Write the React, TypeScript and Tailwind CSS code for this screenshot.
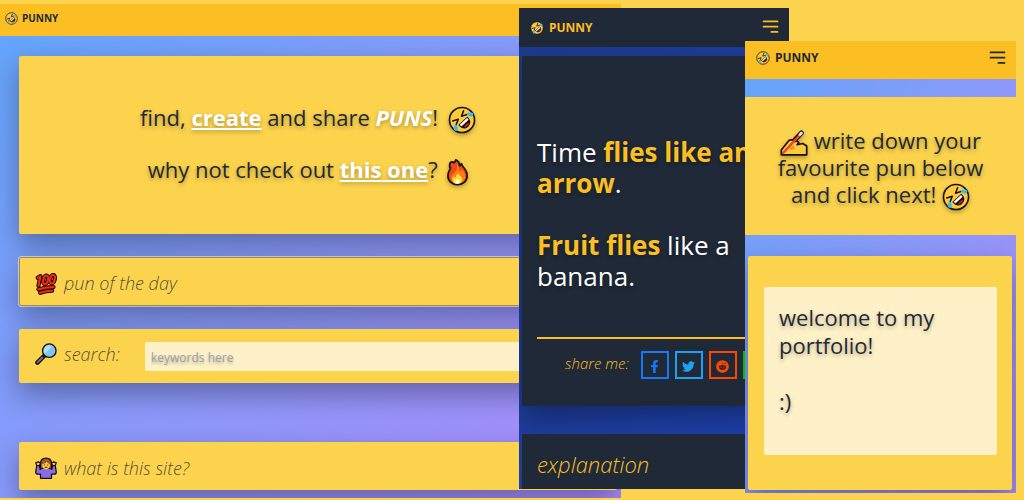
import type { ReactNode } from "react";
import { FaFacebookF, FaLine, FaReddit, FaTwitter } from "react-icons/fa";

function Rofl({ className }: { className: string }) {
  return (
    <svg viewBox="0 0 32 32" className={className} aria-hidden="true">
      <circle cx="16" cy="16" r="14.3" fill="#ffc83d" stroke="#111" strokeWidth="1.8" />
      <g transform="rotate(-43 16 16)" strokeLinecap="round" strokeLinejoin="round">
        <path d="M7.500 9.500l6 3-6 2.800M24.500 9.500l-6 3 6 2.800" fill="none" stroke="#111" strokeWidth="1.700" />
        <path d="M9.500 18h13c0 4.800-2.500 7.800-6.500 7.800S9.500 22.800 9.500 18z" fill="#111" stroke="#111" strokeWidth="1.200" />
        <path d="M10.300 18.300h11.400v2.700H10.300z" fill="#fff" />
        <path d="M12.500 24c1-1.600 6-1.600 7 0-1.200 1.400-5.800 1.400-7 0z" fill="#e8122a" />
        <path d="M7.500 14.800c-2.800-.4-5.300 1-5.800 3.200-.4 1.900.9 3.200 2.700 2.800 2-.5 3-2.600 3.100-6z" fill="#3fb8f0" />
        <path d="M24.500 14.800c2.800-.4 5.300 1 5.800 3.200.4 1.900-.9 3.200-2.700 2.800-2-.5-3-2.600-3.100-6z" fill="#3fb8f0" />
      </g>
    </svg>
  );
}

function Fire({ className }: { className: string }) {
  return (
    <svg viewBox="0 0 24 32" className={className} aria-hidden="true">
      <path
        d="M10 2c3 1.500 4.500 4 4.500 7 1-.8 1.500-1.500 2-2.500 1 2.500 2 4 3.500 5.500 2 2.500 3 5 3 8 0 6.500-4.500 10.500-11 10.500S1 26.500 1 20c0-3.500 1.500-6 3-8.500-1-1-1.300-2.500-1-4C3.300 6 4.500 4.500 6 4.500c.8 0 1.500.5 2 1C9 4.500 9.800 3.500 10 2z"
        fill="#ee4b12"
        stroke="#111"
        strokeWidth="1.900"
        strokeLinejoin="round"
      />
      <path d="M11 7c1 4 .5 6-1.500 8.500C7 18.500 4 20 5 24.500c1 3 4 4.300 7.500 4.300 5 0 8.500-3 8.500-7.800 0-3.500-2-5.500-4-8-1 1.500-2 2-3.200 2.200C14.500 12 13.500 9 11 7z" fill="#ff7a1a" />
      <path d="M7 21c1.300.3 1.800 1 2.300 2 1-2 1.500-4 3.700-5.500 0 2.500 4.500 3.500 4.500 7 0 3-2.500 5-5.700 5S6.300 27.500 6.300 25c0-1.500.2-2.800.7-4z" fill="#ffdf2b" />
      <path d="M9.500 27.300c0-1.300 1.300-2.500 2.500-3.500 1 1.200 2.500 2 2.500 3.500 0 1.200-1 2-2.500 2s-2.500-.8-2.500-2z" fill="#fff" />
    </svg>
  );
}

function Hundred({ className }: { className: string }) {
  return (
    <svg viewBox="0 0 32 32" className={className} aria-hidden="true">
      {[
        { stroke: "#150503", width: 6 },
        { stroke: "#ee2a10", width: 3.2 },
      ].map((layer) => (
        <g key={layer.stroke} fill="none" stroke={layer.stroke} strokeWidth={layer.width} strokeLinecap="round" strokeLinejoin="round">
          <path d="M4 7l4-2.500-3 14" />
          <ellipse cx="15.500" cy="10" rx="3.400" ry="6.300" transform="rotate(16 15.500 10)" />
          <ellipse cx="25.300" cy="9" rx="3.400" ry="6.300" transform="rotate(16 25.300 9)" />
          <path d="M5 23.800c7-2.300 14-3.300 22-3.300M7.500 28.800c5.500-2 11-3 17.500-3" />
        </g>
      ))}
    </svg>
  );
}

function Magnifier({ className }: { className: string }) {
  return (
    <svg viewBox="0 0 32 32" className={className} aria-hidden="true">
      <path d="M3.500 28.500l10-10" stroke="#111" strokeWidth="6.500" strokeLinecap="round" />
      <path d="M3.800 28.200l7-7" stroke="#6d7378" strokeWidth="3" strokeLinecap="round" />
      <circle cx="20.800" cy="11.200" r="9.800" fill="#84c5f4" stroke="#111" strokeWidth="1.900" />
      <path d="M14 15.500l10.500-10.500c-4-2.500-9-1-11 3-1.200 2.500-.8 5.500.5 7.500z" fill="#b5defa" />
    </svg>
  );
}

function Shrug({ className }: { className: string }) {
  return (
    <svg viewBox="0 0 32 32" className={className} aria-hidden="true">
      <g stroke="#111" strokeWidth="1.800" strokeLinejoin="round">
        <path d="M8 17V9.500C8 4.500 11 1.500 16 1.500s8 3 8 8V17z" fill="#a0562d" />
        <path d="M1 8.500l4-1.500 3 2-2 4H3zM31 8.500L27 7l-3 2 2 4h3z" fill="#ffc83d" />
        <path d="M2.500 12.500h4l1 5.500c2-1.500 5-2 8.500-2s6.500.5 8.500 2l1-5.500h4L31 22c0 2-1.500 3-3.500 3H24v6H8v-6H4.500C2.500 25 1 24 1 22z" fill="#8a6bea" />
      </g>
      <path d="M10.500 10c2.800 0 5.500-1.500 6.500-3.500.5 2 2 3 4.500 3.500v2.500c0 3.500-2.500 5.500-5.500 5.500s-5.500-2-5.500-5.500z" fill="#ffc83d" />
      <path d="M13.500 11.500v.1M18.500 11.500v.1M14.800 15h2.500" stroke="#111" strokeWidth="1.400" strokeLinecap="round" />
    </svg>
  );
}

function WritingHand({ className }: { className: string }) {
  return (
    <svg viewBox="0 0 32 32" className={className} aria-hidden="true">
      <path
        d="M1.500 29.500V24L9 14.500c1-1.500 2-2 3.500-2H18l3.500 3-2 2.500 6.500-1.500 4.500 3v10z"
        fill="#ffc83d"
        stroke="#111"
        strokeWidth="1.900"
        strokeLinejoin="round"
      />
      <path d="M10.500 22l5-4 1.500 4c-2 2.500-5 2.500-6.500 0z" fill="#e39d22" />
      <path d="M17 12.500L24.500 4.500" stroke="#111" strokeWidth="5.600" strokeLinecap="round" />
      <path d="M3.500 27.500L22.500 7" stroke="#f0432a" strokeWidth="2.700" strokeLinecap="round" />
      <path d="M22.800 6.500l1.700-1.900" stroke="#dfe8ee" strokeWidth="3.200" strokeLinecap="round" />
    </svg>
  );
}

function MenuButton() {
  return (
    <button type="button" aria-label="Menu">
      <svg viewBox="0 0 24 24" className="block size-[21px]" fill="none" stroke="currentColor" strokeWidth="2" strokeLinecap="round">
        <path d="M4 5h16M4 11h16M13 17h7" />
      </svg>
    </button>
  );
}

const shareLinks = [
  { label: "Facebook", icon: <FaFacebookF />, style: "border-[#1877f2] text-[#1877f2]" },
  { label: "Twitter", icon: <FaTwitter />, style: "border-[#1da1f2] text-[#1da1f2]" },
  { label: "Reddit", icon: <FaReddit />, style: "border-[#ff4500] text-[#ff4500]" },
  { label: "Line", icon: <FaLine />, style: "border-[#00c300] text-[#00c300]" },
];

const emoji = "-my-1 inline-block align-middle drop-shadow-[0_2px_2px_rgba(0,0,0,0.3)]";
const cardShadow = "shadow-[0_12px_28px_rgba(0,0,0,0.32)]";

function SectionButton({ icon, children, className }: { icon: ReactNode; children: ReactNode; className: string }) {
  return (
    <button
      type="button"
      className={`flex w-full items-center gap-[7px] rounded-xs border bg-[#fcd34d] px-[15px] pt-1 text-left text-[18px] font-light italic text-[#1f2937]/80 ${cardShadow} ${className}`}
    >
      {icon}
      {children}
    </button>
  );
}

function HomeWindow() {
  return (
    <section className="col-span-2 col-start-1 row-start-1 mt-1 min-w-0 overflow-hidden bg-linear-to-br from-[#60a5fa] to-[#a78bfa]">
      <header className="flex h-8 items-center gap-1 bg-[#fbbf24] px-[5px] pb-1">
        <Rofl className="size-[13px]" />
        <h1 className="text-[10px] font-bold">PUNNY</h1>
      </header>
      <main className="flex flex-col pt-5 pr-1 pb-2 pl-[19px]">
        <div
          className={`flex h-[178px] flex-col items-center justify-center gap-4 rounded-xs bg-[#fcd34d] pr-5 pb-1 text-[22px] leading-9 whitespace-nowrap [text-shadow:0_2px_4px_rgba(0,0,0,0.3)] ${cardShadow}`}
        >
          <p>
            find,{" "}
            <a href="#create" className="font-bold text-white underline decoration-2 underline-offset-2">create</a> and share{" "}
            <em className="font-bold text-white">PUNS</em>! <Rofl className={`ml-1 size-7 ${emoji}`} />
          </p>
          <p>
            why not check out{" "}
            <a href="#pun" className="font-bold text-white underline decoration-2 underline-offset-2">this one</a>?{" "}
            <Fire className={`ml-1 h-7 w-[21px] ${emoji}`} />
          </p>
        </div>
        <SectionButton
          icon={<Hundred className="size-[22px]" />}
          className="mt-[23px] h-[49px] border-[#a58a3c] outline outline-white/50"
        >
          pun of the day
        </SectionButton>
        <form className={`mt-[23px] flex h-[54px] items-center gap-[7px] rounded-xs bg-[#fcd34d] pb-1 pl-4 ${cardShadow}`}>
          <Magnifier className="size-[22px]" />
          <label htmlFor="search" className="w-[74px] text-[18px] font-light italic text-[#1f2937]/80">
            search:
          </label>
          <input
            id="search"
            type="text"
            placeholder="keywords here"
            className="mt-1 h-[29px] min-w-0 flex-1 rounded-xs bg-[#fef1c7] px-[6px] pt-[2px] text-xs [text-shadow:0_2px_3px_rgba(0,0,0,0.3)] placeholder:text-[#9ca3af]"
          />
        </form>
        <SectionButton icon={<Shrug className="size-[22px]" />} className="mt-[59px] h-12 border-transparent bg-clip-border">
          what is this site?
        </SectionButton>
      </main>
    </section>
  );
}

function PunWindow() {
  return (
    <section className="z-10 col-span-3 col-start-2 row-start-1 mt-2 min-w-0 self-start overflow-hidden bg-linear-to-br from-[#1e3a8a] to-[#1e40af]">
      <header className="flex h-[39px] items-center justify-between bg-[#1f2937] pr-2 pl-[11px] text-[#fbbf24]">
        <div className="flex items-center gap-[5px]">
          <Rofl className="size-[14px]" />
          <h2 className="text-xs font-bold">PUNNY</h2>
        </div>
        <MenuButton />
      </header>
      <main className="px-[3px] pt-[9px]">
        <article className={`flex h-[350px] flex-col rounded-xs bg-[#1f2937] px-[15px] pt-[81px] ${cardShadow}`}>
          <p className="text-[26px] leading-[31px] whitespace-nowrap text-white [text-shadow:0_2px_4px_rgba(0,0,0,0.3)]">
            Time <strong className="font-bold text-[#fbbf24]">flies like an</strong>
            <br />
            <strong className="font-bold text-[#fbbf24]">arrow</strong>.
            <br />
            <br />
            <strong className="font-bold text-[#fbbf24]">Fruit flies</strong> like a
            <br />
            banana.
          </p>
          <div className="mt-[45px] flex items-center justify-center gap-[6px] border-t-2 border-[#fbbf24] pt-3 pl-7">
            <span className="mr-[6px] pb-1 text-[15px] font-light whitespace-nowrap text-[#fbbf24] italic">share me:</span>
            {shareLinks.map((link) => (
              <a
                key={link.label}
                href="#share"
                aria-label={link.label}
                className={`flex size-7 shrink-0 items-center justify-center border-2 pt-[2px] text-[13px] ${link.style}`}
              >
                {link.icon}
              </a>
            ))}
          </div>
        </article>
        <button
          type="button"
          className="mt-7 flex h-[55px] w-full items-center rounded-t-xs bg-[#1f2937] px-[15px] pt-[6px] text-[22px] font-light text-[#fbbf24] italic"
        >
          explanation
        </button>
      </main>
    </section>
  );
}

function ComposeWindow() {
  return (
    <section className="z-20 col-span-2 col-start-4 row-start-1 mt-[41px] min-w-0 self-start overflow-hidden bg-linear-to-br from-[#60a5fa] to-[#a78bfa]">
      <header className="flex h-[38px] items-center justify-between bg-[#fbbf24] pr-2 pb-1 pl-[11px]">
        <div className="flex items-center gap-[5px]">
          <Rofl className="size-[14px]" />
          <h2 className="text-xs font-bold">PUNNY</h2>
        </div>
        <MenuButton />
      </header>
      <main>
        <label
          htmlFor="pun"
          className="mt-[18px] block h-[138px] bg-[#fcd34d] pt-[30px] text-center text-[22px] leading-[27px] whitespace-nowrap [text-shadow:0_2px_4px_rgba(0,0,0,0.3)]"
        >
          <WritingHand className={`size-7 ${emoji}`} /> write down your
          <br />
          favourite pun below
          <br />
          and click next! <Rofl className={`size-7 ${emoji}`} />
        </label>
        <div className={`mt-[21px] mr-1 mb-[3px] ml-[3px] rounded-xs bg-[#fcd34d] pt-[31px] pr-[15px] pb-[35px] pl-4 ${cardShadow}`}>
          <textarea
            id="pun"
            defaultValue={"welcome to my\nportfolio!\n\n:)"}
            className="block h-[168px] w-full resize-none rounded-xs bg-[#fef1c7] px-[15px] py-4 text-[22px] leading-[28px] [text-shadow:0_2px_4px_rgba(0,0,0,0.3)]"
          />
        </div>
      </main>
    </section>
  );
}

export default function App() {
  return (
    <div className="grid min-h-screen grid-cols-[519fr_102fr_124fr_44fr_227fr_8fr] items-start overflow-hidden bg-[#fcd34d] font-['Open_Sans','Noto_Sans',sans-serif] text-[#1f2937]">
      <HomeWindow />
      <PunWindow />
      <ComposeWindow />
    </div>
  );
}
